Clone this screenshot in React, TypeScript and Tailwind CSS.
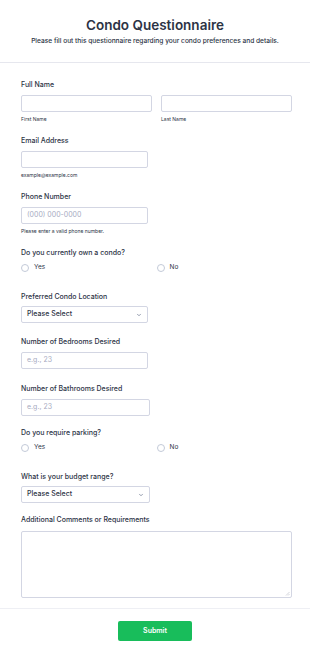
import React from "react";
import { ChevronDown } from "lucide-react";

const font = { fontFamily: "Inter, 'Noto Sans', sans-serif" };

function Label({ children }: { children: React.ReactNode }) {
  return <div className="text-[7px] leading-[10px] font-medium text-[#2c3345]">{children}</div>;
}

function TextBox({ width, placeholder }: { width: string; placeholder?: string }) {
  return (
    <div
      className={`${width} h-[17px] mt-[5px] border border-[#d3d6e3] rounded-[2px] bg-white flex items-center px-[5px] text-[7px] text-[#a7abbf]`}
    >
      {placeholder}
    </div>
  );
}

function Select({ width }: { width: string }) {
  return (
    <div
      className={`${width} h-[17px] mt-[4px] border border-[#d3d6e3] rounded-[2px] bg-white flex items-center justify-between px-[5px] text-[7px] font-medium text-[#2c3345]`}
    >
      <span>Please Select</span>
      <ChevronDown size={6} strokeWidth={2.5} className="text-[#57647e]" />
    </div>
  );
}

function Help({ children }: { children: React.ReactNode }) {
  return <div className="mt-[3px] text-[5px] leading-[8px] text-[#2c3345]">{children}</div>;
}

function Radios() {
  return (
    <div className="grid grid-cols-2 mt-[5px]">
      {["Yes", "No"].map((v) => (
        <div key={v} className="flex items-center gap-[5px] h-[10px]">
          <span className="w-[8px] h-[8px] rounded-full border border-[#c3cad8] bg-white" />
          <span className="text-[6.5px] text-[#2c3345]">{v}</span>
        </div>
      ))}
    </div>
  );
}

export default function App() {
  return (
    <div style={font} className="w-[310px] min-h-[657px] bg-white">
      {/* Header */}
      <div className="pt-[16px] pb-[16px] text-center border-b border-[#e6e7ee]">
        <h1 className="text-[13.5px] leading-[18px] font-semibold text-[#2c3345]">Condo Questionnaire</h1>
        <p className="mt-[2px] text-[6.6px] leading-[10px] font-medium text-[#2c3345]">
          Please fill out this questionnaire regarding your condo preferences and details.
        </p>
      </div>

      <div className="pl-[21px] w-[292px]">
        {/* Full Name */}
        <div className="mt-[17px]">
          <Label>Full Name</Label>
          <div className="flex gap-[9px]">
            <div className="flex-1">
              <TextBox width="w-full" />
              <Help>First Name</Help>
            </div>
            <div className="flex-1">
              <TextBox width="w-full" />
              <Help>Last Name</Help>
            </div>
          </div>
        </div>

        {/* Email */}
        <div className="mt-[13px]">
          <Label>Email Address</Label>
          <TextBox width="w-[127px]" />
          <Help>example@example.com</Help>
        </div>

        {/* Phone */}
        <div className="mt-[13px]">
          <Label>Phone Number</Label>
          <TextBox width="w-[127px]" placeholder="(000) 000-0000" />
          <Help>Please enter a valid phone number.</Help>
        </div>

        {/* Own condo */}
        <div className="mt-[13px]">
          <Label>Do you currently own a condo?</Label>
          <Radios />
        </div>

        {/* Location */}
        <div className="mt-[19px]">
          <Label>Preferred Condo Location</Label>
          <Select width="w-[127px]" />
        </div>

        {/* Bedrooms */}
        <div className="mt-[14px]">
          <Label>Number of Bedrooms Desired</Label>
          <TextBox width="w-[127px]" placeholder="e.g., 23" />
        </div>

        {/* Bathrooms */}
        <div className="mt-[15px]">
          <Label>Number of Bathrooms Desired</Label>
          <TextBox width="w-[129px]" placeholder="e.g., 23" />
        </div>

        {/* Parking */}
        <div className="mt-[12px]">
          <Label>Do you require parking?</Label>
          <Radios />
        </div>

        {/* Budget */}
        <div className="mt-[19px]">
          <Label>What is your budget range?</Label>
          <Select width="w-[129px]" />
        </div>

        {/* Comments */}
        <div className="mt-[12px]">
          <Label>Additional Comments or Requirements</Label>
          <div className="relative mt-[6px] h-[67px] border border-[#d3d6e3] rounded-[2px] bg-white">
            <svg className="absolute right-[1px] bottom-[1px]" width="5" height="5" viewBox="0 0 5 5">
              <path d="M4.5 1 L1 4.5 M4.5 3 L3 4.5" stroke="#b5b8c5" strokeWidth="0.6" />
            </svg>
          </div>
        </div>
      </div>

      {/* Footer */}
      <div className="mt-[10px] border-t border-[#eeeff4] flex justify-center pt-[12px] pb-[17px]">
        <button className="w-[74px] h-[20px] rounded-[2px] bg-[#18bd5b] text-white text-[7px] font-semibold">
          Submit
        </button>
      </div>
    </div>
  );
}
